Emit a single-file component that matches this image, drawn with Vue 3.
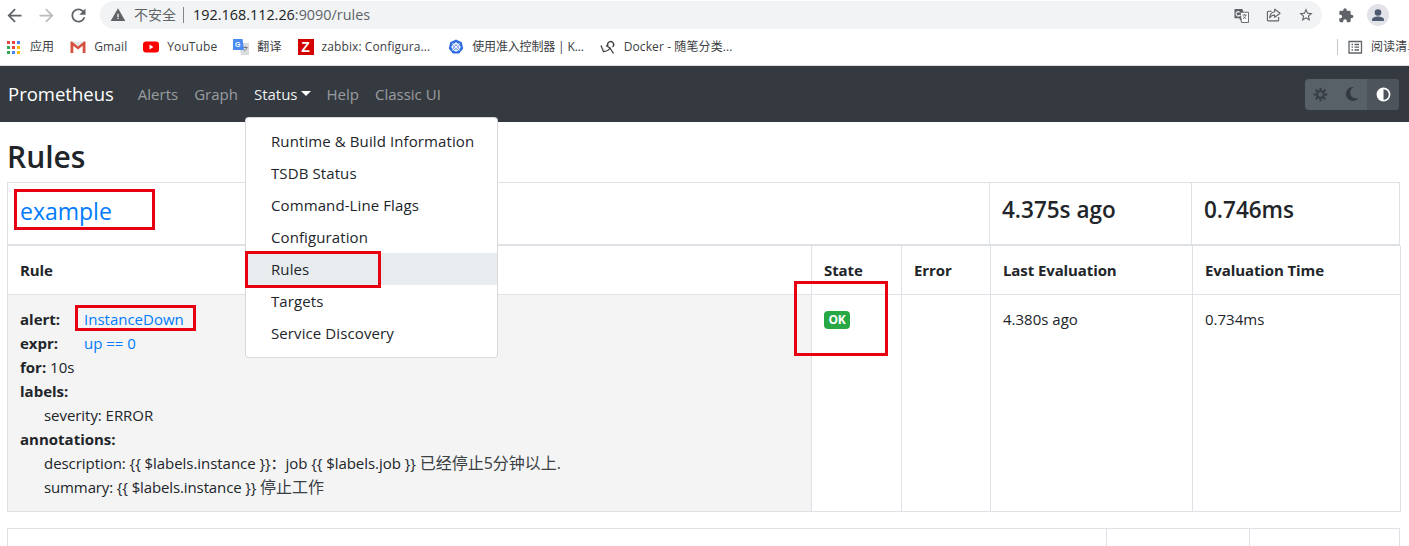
<script setup>
const navLinks = [
  { label: 'Alerts' },
  { label: 'Graph' },
  { label: 'Status', active: true },
  { label: 'Help' },
  { label: 'Classic UI' }
]
const menu = ['Runtime & Build Information', 'TSDB Status', 'Command-Line Flags', 'Configuration', 'Rules', 'Targets', 'Service Discovery']
const mustInstance = '{{ $labels.instance }}'
const mustJob = '{{ $labels.job }}'
const description = `description: ${mustInstance}：job ${mustJob} `
const summary = `summary: ${mustInstance} `
</script>

<template>
  <div class="page">
    <header class="toolbar">
      <svg class="tool" viewBox="0 0 24 24"><path fill="#5f6368" d="M20 11H7.830l5.590-5.590L12 4l-8 8 8 8 1.410-1.410L7.830 13H20v-2z"/></svg>
      <svg class="tool" viewBox="0 0 24 24"><path fill="#b9bbbe" d="M4 11h12.170l-5.590-5.590L12 4l8 8-8 8-1.410-1.410L16.170 13H4v-2z"/></svg>
      <svg class="tool" viewBox="0 0 24 24"><path fill="#5f6368" d="M17.650 6.350C16.200 4.900 14.210 4 12 4c-4.420 0-7.990 3.580-7.990 8s3.570 8 7.990 8c3.730 0 6.840-2.550 7.730-6h-2.080c-.82 2.330-3.040 4-5.650 4-3.310 0-6-2.690-6-6s2.690-6 6-6c1.660 0 3.140.69 4.220 1.780L13 11h7V4l-2.350 2.350z"/></svg>
      <div class="omnibox">
        <svg class="warn" viewBox="0 0 24 24"><path fill="#5f6368" d="M1 21h22L12 2 1 21z"/><path fill="#f1f3f4" d="M11 16h2v2h-2zM11 10h2v5h-2z"/></svg>
        <span class="insecure">不安全</span>
        <span class="omni-sep"></span>
        <span class="url"><span class="host">192.168.112.26</span>:9090/rules</span>
        <span class="omni-right">
          <svg class="omni-icon" viewBox="0 0 16 16"><path fill="#5f6368" d="M.5 1h8.500l1 3H9v9H6.500L5.800 11H.5z"/><path fill="#fff" stroke="#5f6368" d="M6.500 4.500h9v11h-7.500z"/><path fill="none" stroke="#f1f3f4" stroke-width="1.200" d="M6 4.500A2.300 2.300 0 1 0 6 8H4.500"/><path fill="none" stroke="#5f6368" stroke-width=".9" d="M9 7.500h4.500M11.200 6.500v1M12.600 7.500c-.4 2-1.600 3.200-3 4M10 9c.6 1.200 1.800 2 3 2.400"/></svg>
          <svg class="omni-icon" viewBox="0 0 16 16"><path fill="none" stroke="#5f6368" stroke-width="1.200" stroke-linejoin="round" d="M13.500 9.500v3.200a1 1 0 0 1-1 1h-10a1 1 0 0 1-1-1V4.500a1 1 0 0 1 1-1h3.500M9.300 1.200 15 5.600 9.300 10V7.600C6.800 7.600 5 8.500 3.800 10.500c.3-3.700 2.300-6 5.500-6.500z"/></svg>
          <svg class="omni-icon star" viewBox="0 0 24 24"><path fill="#5f6368" d="M22 9.240l-7.190-.62L12 2 9.190 8.630 2 9.240l5.460 4.730L5.820 21 12 17.270 18.180 21l-1.630-7.030L22 9.240zM12 15.400l-3.760 2.270 1-4.280-3.320-2.880 4.380-.38L12 6.100l1.710 4.040 4.380.38-3.320 2.880 1 4.280L12 15.400z"/></svg>
        </span>
      </div>
      <svg class="puzzle" viewBox="0 0 24 24"><path fill="#5f6368" d="M20.500 11H19V7c0-1.100-.9-2-2-2h-4V3.500C13 2.120 11.880 1 10.500 1S8 2.120 8 3.500V5H4c-1.100 0-1.990.9-1.990 2v3.800H3.500c1.490 0 2.700 1.210 2.700 2.700s-1.210 2.700-2.700 2.700H2V20c0 1.100.9 2 2 2h3.800v-1.500c0-1.490 1.210-2.700 2.700-2.700 1.490 0 2.700 1.210 2.700 2.700V22H17c1.100 0 2-.9 2-2v-4h1.500c1.380 0 2.500-1.120 2.500-2.500S21.880 11 20.500 11z"/></svg>
      <svg class="avatar" viewBox="0 0 22 22"><circle cx="11" cy="11" r="11" fill="#e1e3e8"/><circle cx="11" cy="8.500" r="3.300" fill="#4d5a70"/><path fill="#4d5a70" d="M5 17v-1.500c0-2 3.500-3 6-3s6 1 6 3V17z"/></svg>
    </header>

    <nav class="bookmarks">
      <div class="bm bm-apps">
        <svg class="bm-icon apps" viewBox="0 0 13 13">
          <g fill="#e8453c"><rect width="3" height="3"/><rect x="5" width="3" height="3"/></g>
          <rect x="10" width="3" height="3" fill="#4285f4"/>
          <rect y="5" width="3" height="3" fill="#34a853"/><rect x="5" y="5" width="3" height="3" fill="#ea4335"/><rect x="10" y="5" width="3" height="3" fill="#fbbc05"/>
          <rect y="10" width="3" height="3" fill="#34a853"/><rect x="5" y="10" width="3" height="3" fill="#4285f4"/><rect x="10" y="10" width="3" height="3" fill="#fbbc05"/>
        </svg>
        <span>应用</span>
      </div>
      <div class="bm">
        <svg class="bm-icon" viewBox="0 0 16 16"><path fill="#e8e8e8" d="M1 2.500h14V14H1z"/><path fill="#fff" d="M3 5l5 4 5-4v9H3z"/><path fill="#d5503f" d="M.5 2.500h1.500L8 7.500l6-5h1.500V14h-2.800V6.800L8 10.500 3.300 6.800V14H.5z"/></svg>
        <span>Gmail</span>
      </div>
      <div class="bm">
        <svg class="bm-icon" viewBox="0 0 16 16"><rect y="2.500" width="16" height="11" rx="3" fill="#f00"/><path fill="#fff" d="M6.500 5.500v5l4-2.500z"/></svg>
        <span>YouTube</span>
      </div>
      <div class="bm">
        <svg class="bm-icon" viewBox="0 0 16 16"><path fill="#d9dbde" d="M6 4h10v12H8z"/><path fill="#4a8af4" d="M0 0h9.500l1.500 11H0z"/><text x="2" y="8" class="g-letter">G</text><path fill="none" stroke="#6d7278" d="M10.500 8.500h4M12.500 7.500v1M13.800 8.500c-.3 1.500-1.200 2.600-2.500 3.500"/></svg>
        <span>翻译</span>
      </div>
      <div class="bm">
        <span class="z-icon">Z</span>
        <span class="bm-z">zabbix: Configura...</span>
      </div>
      <div class="bm bm-k8s">
        <svg class="bm-icon k8s" viewBox="0 0 16 16"><path fill="#326ce5" d="M8 .5l5.800 2.800 1.400 6.200-4 5h-6.400l-4-5 1.400-6.200z"/><circle cx="8" cy="8" r="3.400" fill="none" stroke="#fff" stroke-width="1.100"/><path stroke="#fff" stroke-width=".9" d="M8 3v10M3 8h10M4.500 4.500l7 7M11.500 4.500l-7 7"/></svg>
        <span class="k8s-text">使用准入控制器 | K...</span>
      </div>
      <div class="bm bm-docker">
        <svg class="bm-icon" viewBox="0 0 16 16"><path fill="none" stroke="#3b3b3b" stroke-width="1.300" d="M1 6.500l2.500 6c2.500 0 5-1 6.500-3.500l-4-2.500M10 9l3.500 5.500M8 7a3 3 0 1 1 4.500 1"/><path fill="#d9d9d9" d="M2 8l4 3-2 1z"/></svg>
        <span>Docker - 随笔分类...</span>
      </div>
      <span class="bm-sep"></span>
      <div class="bm bm-read">
        <svg class="bm-icon" viewBox="0 0 16 16"><path fill="none" stroke="#5f6368" stroke-width="1.300" d="M2 2.500h12.500v11.500H2zM4.500 5.500h1.500M7.500 5.500h4.500M4.500 8.200h1.500M7.500 8.200h4.500M4.500 11h1.500M7.500 11h4.500"/></svg>
        <span>阅读清单</span>
      </div>
    </nav>

    <nav class="navbar">
      <span class="brand">Prometheus</span>
      <ul class="nav-links">
        <li v-for="l in navLinks" :key="l.label" :class="['nav-link', { active: l.active }]">
          {{ l.label }}<span v-if="l.active" class="caret"></span>
        </li>
      </ul>
      <div class="theme-group">
        <span class="theme-btn">
          <svg viewBox="0 0 16 16" class="theme-icon"><circle cx="8" cy="8" r="3.600" fill="none" stroke="#343a40" stroke-width="2"/><path stroke="#343a40" stroke-width="2" fill="none" d="M8 .8v2.600M8 12.600v2.600M.8 8h2.600M12.600 8h2.600M2.900 2.900l1.900 1.900M11.200 11.200l1.900 1.900M13.100 2.900l-1.900 1.900M4.800 11.200l-1.900 1.900"/></svg>
        </span>
        <span class="theme-btn">
          <svg viewBox="0 0 16 16" class="theme-icon moon"><path fill="#343a40" d="M9.800 1A7 7 0 1 0 14.600 12 5.600 5.600 0 0 1 9.800 1z"/></svg>
        </span>
        <span class="theme-btn on">
          <svg viewBox="0 0 16 16" class="theme-icon"><circle cx="8" cy="8" r="6.500" fill="none" stroke="#fff" stroke-width="1.800"/><path fill="#fff" d="M8 1.500a6.500 6.500 0 0 0 0 13z"/></svg>
        </span>
      </div>
    </nav>

    <main class="content">
      <h2 class="title">Rules</h2>
      <table class="tbl head-tbl">
        <colgroup><col class="c-a" /><col class="c-b" /><col class="c-c" /></colgroup>
        <tbody>
          <tr class="group-row">
            <td class="group-name"><a class="group-link">example</a></td>
            <td class="h4">4.375s ago</td>
            <td class="h4">0.746ms</td>
          </tr>
        </tbody>
      </table>
      <table class="tbl rule-tbl">
        <colgroup><col class="r1" /><col class="r2" /><col class="r3" /><col class="c-b" /><col class="c-c" /></colgroup>
        <thead>
          <tr class="th-row"><th>Rule</th><th>State</th><th>Error</th><th>Last Evaluation</th><th>Evaluation Time</th></tr>
        </thead>
        <tbody>
          <tr>
            <td class="rule-cell">
              <div><strong class="lbl">alert:</strong><a class="link">InstanceDown</a></div>
              <div><strong class="lbl">expr:</strong><a class="link">up == 0</a></div>
              <div><strong>for:</strong> 10s</div>
              <div><strong>labels:</strong></div>
              <div class="ind">severity: ERROR</div>
              <div><strong>annotations:</strong></div>
              <div class="ind">{{ description }}<span class="cjk">已经停止5分钟以上.</span></div>
              <div class="ind sum">{{ summary }}<span class="cjk">停止工作</span></div>
            </td>
            <td><span class="badge">OK</span></td>
            <td></td>
            <td>4.380s ago</td>
            <td>0.734ms</td>
          </tr>
        </tbody>
      </table>
      <table class="tbl next-tbl">
        <colgroup><col /><col class="n2" /><col class="n3" /></colgroup>
        <tbody><tr><td></td><td></td><td></td></tr></tbody>
      </table>
    </main>

    <ul class="dropdown">
      <li v-for="m in menu" :key="m" :class="['dd-item', { hl: m === 'Rules' }]">{{ m }}</li>
    </ul>

    <span class="mark m-example"></span>
    <span class="mark m-rules"></span>
    <span class="mark m-instance"></span>
    <span class="mark m-state"></span>
  </div>
</template>

<style>
html, body { margin: 0; overflow: hidden; background: #fff; }
</style>

<style scoped>
.page {
  position: relative;
  width: 1409px;
  height: 546px;
  overflow: hidden;
  font-family: "Open Sans", "Noto Sans CJK SC", sans-serif;
  color: #212529;
  font-size: 15px;
  line-height: 24px;
  background: #fff;
}
.toolbar {
  height: 29px;
  display: flex;
  align-items: center;
  padding: 1px 20px 0 6px;
  box-sizing: border-box;
  gap: 16px;
}
.tool { width: 21px; height: 21px; flex: none; margin: 0 -2.500px; }
.omnibox {
  flex: 1;
  height: 28px;
  margin-left: -2px;
  border-radius: 14px;
  background: #f1f3f4;
  display: flex;
  align-items: center;
  padding: 0 8px 0 10px;
}
.warn { width: 16px; height: 16px; flex: none; }
.insecure { margin-left: 8px; font-size: 14px; color: #5f6368; }
.omni-sep { width: 1px; height: 16px; background: #80868b; margin: 0 9px 0 7px; }
.url { font-size: 14.400px; color: #5f6368; }
.host { color: #202124; }
.omni-right { margin-left: auto; display: flex; gap: 17px; align-items: center; }
.omni-icon { width: 15px; height: 15px; }
.star { width: 16px; height: 16px; }
.puzzle { width: 16px; height: 17px; flex: none; }
.avatar { width: 22px; height: 22px; flex: none; margin-left: -3px; }
.bookmarks {
  height: 37px;
  box-sizing: border-box;
  border-bottom: 1px solid #dadce0;
  display: flex;
  align-items: center;
  padding-left: 7px;
  gap: 16px;
  font-size: 12px;
  letter-spacing: .1px;
  color: #3c4043;
}
.bm { display: flex; align-items: center; gap: 8px; white-space: nowrap; }
.bm-icon { width: 16px; height: 16px; flex: none; }
.apps { width: 13px; height: 13px; margin-right: 2px; }
.g-letter { font: bold 7px "Liberation Sans", sans-serif; fill: #fff; }
.z-icon {
  width: 16px;
  height: 16px;
  flex: none;
  background: #d40000;
  color: #fff;
  font: bold 14px/16px "Liberation Sans", sans-serif;
  text-align: center;
}
.bm-k8s { margin-left: 2px; }
.k8s-text { letter-spacing: -.15px; }
.bm-sep { width: 1px; height: 16px; background: #c4c7ca; margin-left: auto; }
.bm-read { width: 62px; overflow: hidden; margin-left: -7px; }
.navbar {
  height: 56px;
  background: #343a40;
  display: flex;
  align-items: center;
  padding: 0 10px 0 8px;
}
.brand { font-size: 18.500px; color: #fff; line-height: 30px; margin-right: 24px; }
.nav-links { display: flex; list-style: none; margin: 0; padding: 0; gap: 16px; }
.nav-link { font-size: 15px; color: rgba(255, 255, 255, .5); display: flex; align-items: center; }
.nav-link.active { color: rgba(255, 255, 255, .95); }
.caret {
  width: 0;
  height: 0;
  margin-left: 3px;
  margin-top: -2px;
  border-top: 5px solid #fff;
  border-left: 5px solid transparent;
  border-right: 5px solid transparent;
}
.theme-group {
  margin-left: auto;
  height: 31px;
  display: flex;
  border-radius: 4px;
  overflow: hidden;
  background: #586068;
}
.theme-btn { width: 31px; display: flex; align-items: center; justify-content: center; }
.theme-btn.on { width: 32px; background: #4e545c; }
.theme-icon { width: 15px; height: 15px; }
.theme-icon.moon { width: 16px; height: 16px; }
.content { padding: 15px 9px 0 7px; }
.title {
  margin: 0 0 6px 0;
  font-size: 30px;
  font-weight: 600;
  line-height: 39px;
}
.tbl {
  width: 100%;
  table-layout: fixed;
  border-collapse: collapse;
}
.tbl td, .tbl th {
  border: 1px solid #dee2e6;
  padding: 12px;
  vertical-align: top;
  text-align: left;
}
.c-b { width: 202px; }
.c-c { width: 208px; }
.r1 { width: 804px; }
.r2 { width: 90px; }
.r3 { width: 89px; }
.n2 { width: 143px; }
.n3 { width: 150px; }
.group-row td { height: 62px; box-sizing: border-box; vertical-align: middle; padding: 0 12px 7px; }
.group-row .group-name { padding-bottom: 2px; }
.head-tbl td { border-bottom: 2px solid #dee2e6; }
.group-link { font-size: 23px; color: #007bff; }
.h4 { font-size: 22.500px; font-weight: 600; }
.th-row th { height: 48px; box-sizing: border-box; font-weight: 700; padding: 12px; letter-spacing: -.1px; }
.rule-tbl thead th { border-top: 0; }
.rule-cell { background: #f4f4f4; }
.lbl { display: inline-block; width: 64px; }
.link { color: #007bff; }
.ind { padding-left: 24px; letter-spacing: -.05px; }
.ind.sum { letter-spacing: -.12px; }
.cjk { font-size: 16px; letter-spacing: 0; color: #3a3f44; }
.badge {
  display: inline-block;
  width: 26px;
  height: 18px;
  border-radius: 4px;
  background: #28a745;
  color: #fff;
  font-size: 12px;
  line-height: 18px;
  font-weight: 700;
  letter-spacing: -.3px;
  text-align: center;
  vertical-align: 1px;
}
.next-tbl { margin-top: 16px; }
.next-tbl td { height: 60px; }
.dropdown {
  position: absolute;
  left: 245px;
  top: 117px;
  width: 253px;
  box-sizing: border-box;
  margin: 0;
  padding: 7px 0 8px;
  list-style: none;
  background: #fff;
  border: 1px solid rgba(0, 0, 0, .15);
  border-radius: 4px;
}
.dd-item { height: 32px; line-height: 32px; padding-left: 25px; font-size: 15px; letter-spacing: .1px; color: #212529; white-space: nowrap; }
.dd-item.hl { background: #e9ecef; }
.mark { position: absolute; border: 3px solid #e60012; box-sizing: border-box; pointer-events: none; }
.m-example { left: 14px; top: 189px; width: 141px; height: 41px; }
.m-rules { left: 245px; top: 251px; width: 136px; height: 37px; }
.m-instance { left: 75px; top: 305px; width: 121px; height: 26px; }
.m-state { left: 794px; top: 281px; width: 94px; height: 75px; }
</style>
